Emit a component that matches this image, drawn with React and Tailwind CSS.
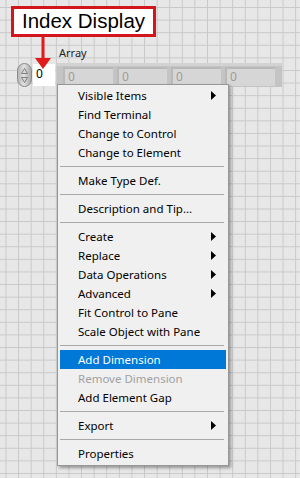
import React from 'react';

const menu = [
  { label: 'Visible Items', sub: true },
  { label: 'Find Terminal' },
  { label: 'Change to Control' },
  { label: 'Change to Element' },
  { sep: true },
  { label: 'Make Type Def.' },
  { sep: true },
  { label: 'Description and Tip...' },
  { sep: true },
  { label: 'Create', sub: true },
  { label: 'Replace', sub: true },
  { label: 'Data Operations', sub: true },
  { label: 'Advanced', sub: true },
  { label: 'Fit Control to Pane' },
  { label: 'Scale Object with Pane' },
  { sep: true },
  { label: 'Add Dimension', active: true },
  { label: 'Remove Dimension', disabled: true },
  { label: 'Add Element Gap' },
  { sep: true },
  { label: 'Export', sub: true },
  { sep: true },
  { label: 'Properties' },
];

function SubArrow({ light }) {
  return (
    <svg width="5" height="9" viewBox="0 0 5 9">
      <polygon points="0,0 5,4.5 0,9" fill={light ? '#fff' : '#000'} />
    </svg>
  );
}

function Spinner() {
  return (
    <div className="w-[15px] h-[24px] rounded-full border border-[#8a8a8a] bg-[linear-gradient(to_right,#b4b4b4,#e2e2e2_45%,#a8a8a8)] flex flex-col items-center justify-center gap-[3px]">
      <svg width="7" height="6" viewBox="0 0 7 6">
        <polygon points="3.5,0.5 6.5,5.5 0.5,5.5" fill="#d8d8d8" stroke="#6a6a6a" strokeWidth="0.8" />
      </svg>
      <svg width="7" height="6" viewBox="0 0 7 6">
        <polygon points="0.5,0.5 6.5,0.5 3.5,5.5" fill="#d8d8d8" stroke="#6a6a6a" strokeWidth="0.8" />
      </svg>
    </div>
  );
}

function Cell() {
  return (
    <div className="w-[50px] h-[19px] bg-[#d6d6d6] border-t-2 border-l-2 border-[#b9b9b9] pl-[3px] text-[12px] leading-[16px] text-[#9c9c9c]">
      0
    </div>
  );
}

export default function App() {
  return (
    <div
      className="relative w-[300px] h-[478px] overflow-hidden pt-[6px] bg-[#e7e7e7] bg-[linear-gradient(to_right,#c9c9c9_1px,transparent_1px),linear-gradient(to_bottom,#c9c9c9_1px,transparent_1px)] bg-[size:12.6px_12.6px] bg-[position:5.5px_7px]"
      style={{ fontFamily: '"Noto Sans", "Open Sans", sans-serif' }}
    >
      {/* callout */}
      <div className="ml-[11px] w-[145px] h-[31px] bg-white border-[3px] border-[#d3161c] flex items-center justify-center">
        <span className="text-[20.5px] leading-none text-black" style={{ fontFamily: '"Liberation Sans", Arial, sans-serif' }}>
          Index Display
        </span>
      </div>

      <div className="ml-[59px] mt-[9px] text-[11px] leading-[14px] text-[#222]">Array</div>

      {/* array control */}
      <div className="mt-[3px] ml-[17px] flex items-start">
        <Spinner />
        <div className="ml-[1px] mt-[1px] w-[22px] h-[22px] bg-white pl-[3px] text-[12px] leading-[20px] text-black">0</div>
        <div className="ml-[2px] w-[225px] h-[24px] bg-[#c4c4c4] border-t-[3px] border-[#d2d2d2] flex gap-[4px] pl-[6px] pt-[1px]">
          <Cell />
          <Cell />
          <Cell />
          <Cell />
        </div>
      </div>

      {/* index display arrow */}
      <svg className="absolute left-[34px] top-[37px]" width="18" height="33" viewBox="0 0 18 33">
        <rect x="7.5" y="0" width="3" height="22" fill="#e11b1b" />
        <polygon points="1,21 17,21 9,32" fill="#e11b1b" />
      </svg>

      {/* context menu */}
      <div className="absolute left-[57px] top-[84px] w-[172px] bg-[#f0f0f0] border border-[#979797] px-[2px] pt-[1px] pb-[2px] shadow-[2px_2px_3px_rgba(0,0,0,0.35)] text-[11.5px]">
        {menu.map((item, i) =>
          item.sep ? (
            <div key={i} className="h-[9px] flex items-center pr-[2px]">
              <div className="h-px w-full bg-[#a8a8a8]" />
            </div>
          ) : (
            <div
              key={i}
              className={`h-[19px] flex items-center justify-between pl-[18px] pr-[10px] ${
                item.active ? 'bg-[#0078d7] text-white' : item.disabled ? 'text-[#a0a0a0]' : 'text-black'
              }`}
            >
              <span>{item.label}</span>
              {item.sub && <SubArrow light={item.active} />}
            </div>
          )
        )}
      </div>
    </div>
  );
}
